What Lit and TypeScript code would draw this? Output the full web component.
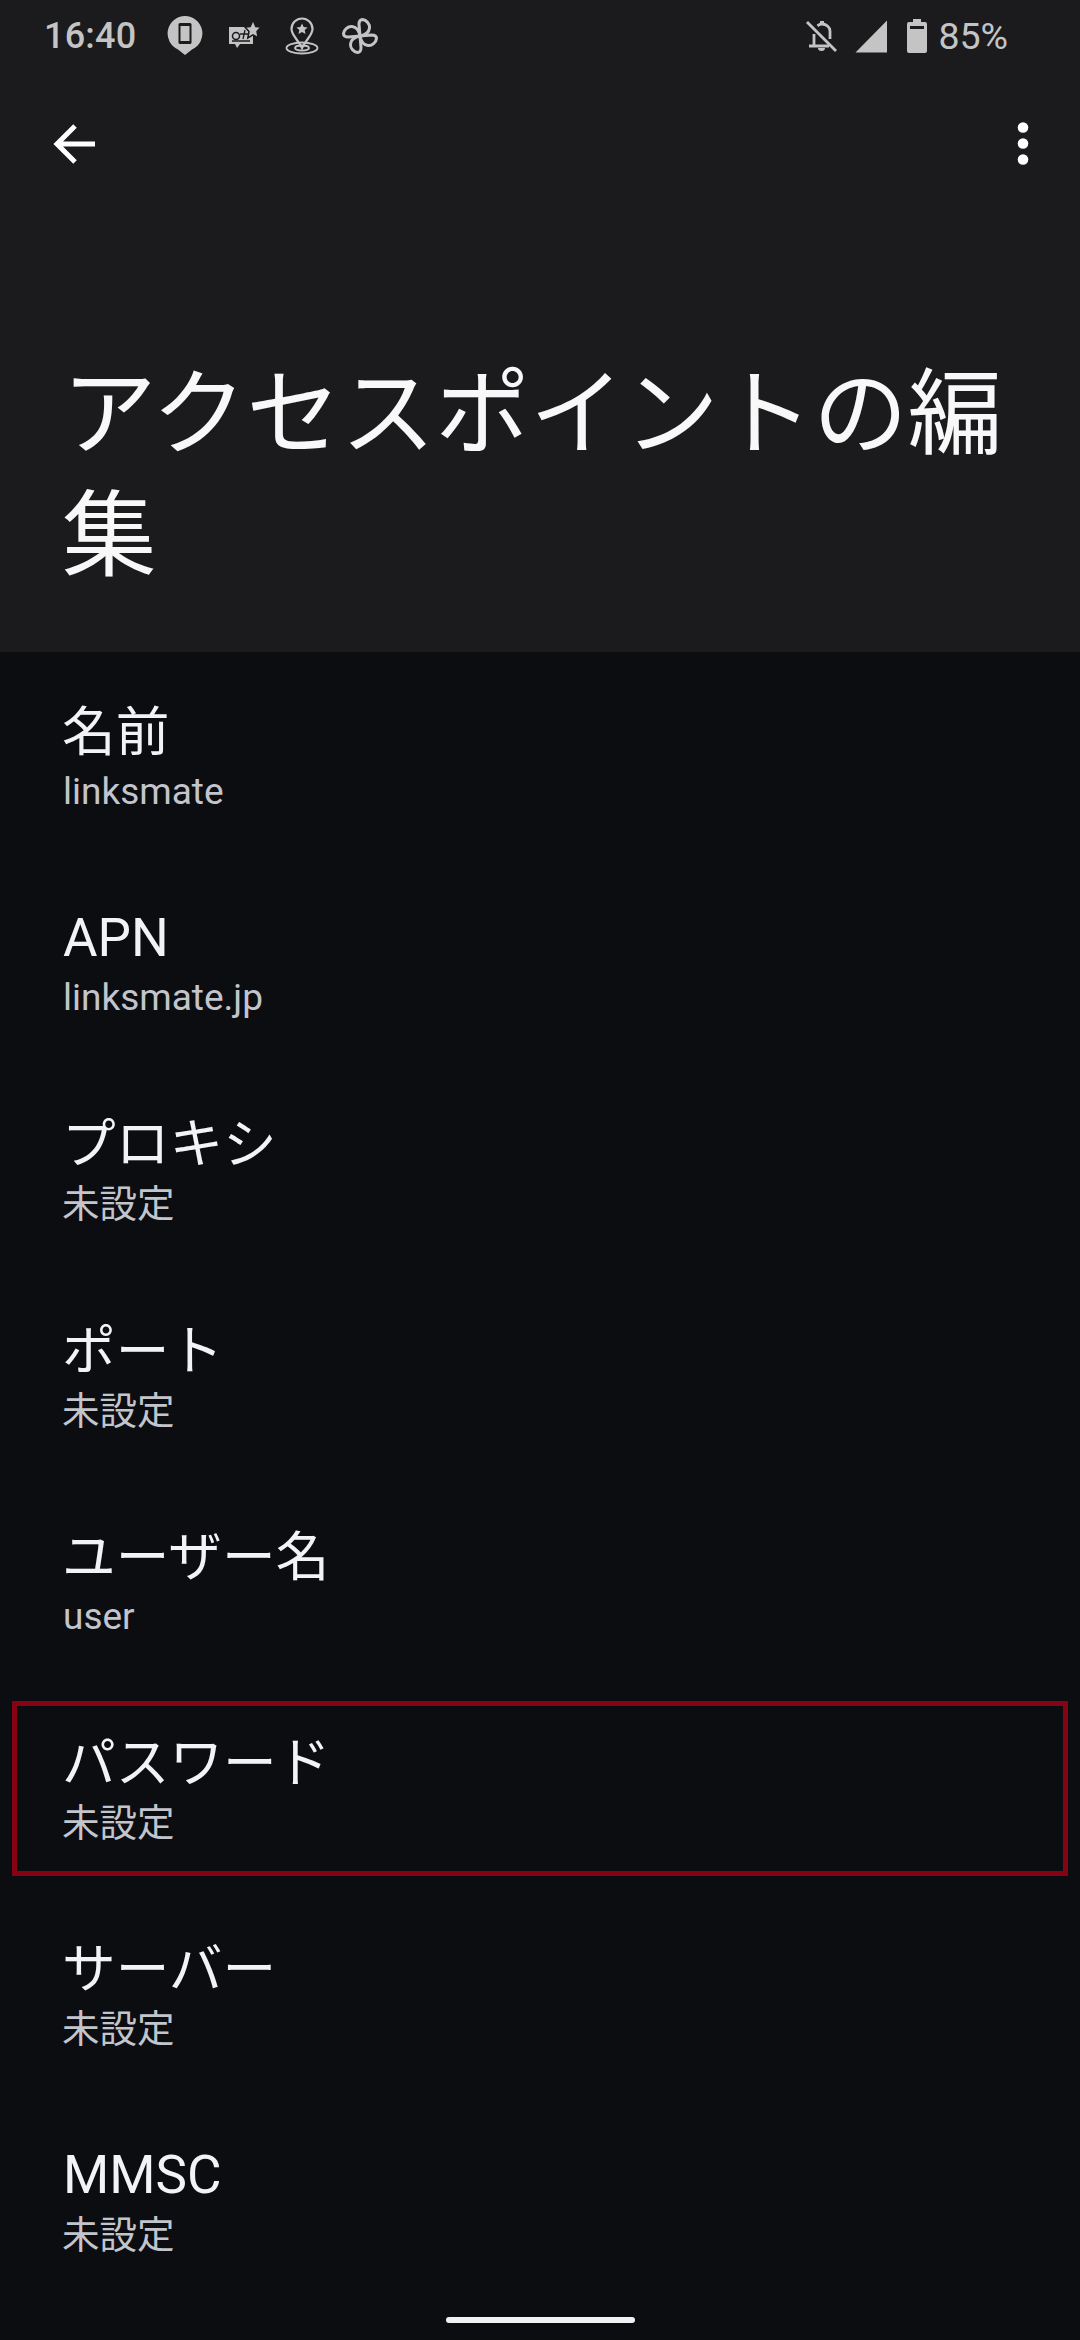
import { LitElement, html, css, svg } from "lit";
import { customElement } from "lit/decorators.js";

const rows: [string, string, boolean?][] = [
  ["名前", "linksmate"],
  ["APN", "linksmate.jp"],
  ["プロキシ", "未設定"],
  ["ポート", "未設定"],
  ["ユーザー名", "user"],
  ["パスワード", "未設定", true],
  ["サーバー", "未設定"],
  ["MMSC", "未設定"],
];

const isCjk = (s: string) => /[^\x00-\x7f]/.test(s);
const blade = "M18 18L17 6.500C17 3 18.500 1.500 20.500 1.500C24.500 2 28 6 27.500 10C27 14.500 23.500 17 18 18z";

@customElement("app-root")
export class AppRoot extends LitElement {
  static styles = css`
    :host {
      display: block;
      width: 1080px;
      height: 2340px;
      overflow: hidden;
      position: relative;
      background: #0c0d10;
      font-family: Roboto, "Noto Sans CJK JP", sans-serif;
    }
    .head { background: #1b1b1d; height: 652px; display: flex; flex-direction: column; }
    .status {
      height: 72px;
      padding: 0 0 0 44px;
      display: flex;
      align-items: center;
      color: #c4c4c4;
      font-size: 36px;
      font-weight: 500;
    }
    .status .time { margin-right: 8px; letter-spacing: 0.2px; }
    .status svg { display: block; flex: none; }
    .left { display: flex; align-items: center; gap: 23px; }
    .spacer { flex: 1; }
    .right { display: flex; align-items: center; margin-right: 72px; }
    .pct { margin-left: 11px; font-weight: 400; font-size: 37.5px; }
    .bar {
      height: 72px;
      margin-top: 36px;
      padding: 0 51px 0 50px;
      display: flex;
      align-items: center;
      justify-content: space-between;
    }
    h1 {
      margin: 165px 0 0;
      padding: 0 40px 0 62px;
      font-family: "Noto Sans CJK JP", sans-serif;
      font-size: 94.5px;
      font-weight: 400;
      line-height: 122px;
      color: #f8f8f9;
    }
    .list { display: flex; flex-direction: column; padding-top: 35px; }
    .row {
      height: 206.2px;
      padding-left: 63px;
      position: relative;
      box-sizing: border-box;
    }
    .t { font-size: 53px; line-height: 69px; padding-top: 11px; color: #f3f3f6; }
    .t.cjk { font-size: 53.7px; margin-left: -1px; }
    .s { font-size: 37px; line-height: 50px; color: #c3c5cc; }
    .s.cjk { font-size: 37.5px; margin-left: -1px; }
    .mark {
      position: absolute;
      left: 12px;
      right: 12px;
      top: -17px;
      height: 175px;
      box-sizing: border-box;
      border: 5px solid #860315;
    }
    .home {
      position: absolute;
      left: 446px;
      top: 2317px;
      width: 189px;
      height: 6px;
      border-radius: 3px;
      background: #f1f1f1;
    }
  `;

  render() {
    return html`
      <div class="head">
        <div class="status">
          <div class="left">
            <span class="time">16:40</span>
            <svg width="36" height="40" viewBox="0 0 36 40">
              <path fill="#c4c4c4" d="M18 0a17.500 17.500 0 0 1 7 33.500L18 39l-7-5.500A17.500 17.500 0 0 1 18 0z" />
              <rect x="11.500" y="7" width="13" height="21" rx="1.500" fill="#1b1b1d" />
              <rect x="13.500" y="10" width="9" height="15" fill="#c4c4c4" />
            </svg>
            <svg width="32" height="32" viewBox="0 0 32 32" style="margin-left:3px">
              <path fill="#c4c4c4" d="M0 7h24v17H11l-3 4-2-4H0z" />
              <circle cx="7" cy="16" r="3.500" fill="#c4c4c4" stroke="#1b1b1d" stroke-width="1.500" />
              <path d="M11 14h11M3 21h18M16 10l-2 9" stroke="#1b1b1d" stroke-width="1.300" fill="none" />
              <path fill="#c4c4c4" stroke="#1b1b1d" stroke-width="1.500" d="M24 0l2.800 6.500 5.200.5-4 4.500 1.200 6.500-5.200-3.200-5.200 3.200 1.200-6.500-4-4.500 5.200-.5z" />
            </svg>
            <svg width="34" height="38" viewBox="0 0 34 38" style="margin-left:1px">
              <path fill="none" stroke="#c4c4c4" stroke-width="2.200" d="M17 1.500a10.500 10.500 0 0 1 10.500 10.500c0 6-6 10-10.500 19-4.500-9-10.500-13-10.500-19a10.500 10.500 0 0 1 10.500-10.500z" />
              <path fill="#c4c4c4" d="M17 6.500l1.700 3.600 3.900.4-2.900 2.600.8 3.900-3.500-2-3.500 2 .8-3.900-2.900-2.600 3.900-.4z" />
              <ellipse cx="17" cy="31" rx="15.500" ry="5.500" fill="none" stroke="#c4c4c4" stroke-width="1.800" />
              <ellipse cx="17" cy="31" rx="7" ry="2.500" fill="none" stroke="#c4c4c4" stroke-width="1.800" />
            </svg>
            <svg width="36" height="36" viewBox="0 0 36 36">
              <g fill="none" stroke="#c4c4c4" stroke-width="3" stroke-linejoin="round">
                ${[0, 90, 180, 270].map((a) => svg`<path transform="rotate(${a} 18 18)" d=${blade} />`)}
              </g>
            </svg>
          </div>
          <div class="spacer"></div>
          <div class="right">
            <svg width="32" height="32" viewBox="0 0 32 32">
              <g fill="none" stroke="#c4c4c4" stroke-width="2.800">
                <path d="M2 2l29 29" />
                <path d="M4 26h20M9 26V14M25 19v-8c0-4-4-7-8-7-2 0-3 .6-4.500 1.800" />
              </g>
              <path fill="#c4c4c4" d="M13 28h7a3.500 3 0 0 1-7 0zM15 1h4v4h-4z" />
            </svg>
            <svg width="33" height="33" viewBox="0 0 33 33" style="margin-left:18px">
              <path fill="#c4c4c4" d="M32 0.500V32.500H0.500z" />
            </svg>
            <svg width="20" height="34" viewBox="0 0 20 34" style="margin-left:19px">
              <path fill="#c4c4c4" d="M6 0h8v3h4a2 2 0 0 1 2 2v27a2 2 0 0 1-2 2H2a2 2 0 0 1-2-2V5a2 2 0 0 1 2-2h4z" />
              <rect x="3" y="7" width="14" height="3" fill="#1b1b1d" />
            </svg>
            <span class="pct">85%</span>
          </div>
        </div>
        <div class="bar">
          <svg width="46" height="42" viewBox="0 0 46 42">
            <path d="M45 21H7M25 3L7 21l18 18" fill="none" stroke="#fff" stroke-width="5" />
          </svg>
          <svg width="12" height="44" viewBox="0 0 12 44">
            <circle cx="6" cy="5.500" r="5.300" fill="#fff" />
            <circle cx="6" cy="21.500" r="5.300" fill="#fff" />
            <circle cx="6" cy="37.500" r="5.300" fill="#fff" />
          </svg>
        </div>
        <h1>アクセスポイントの編集</h1>
      </div>
      <div class="list">
        ${rows.map(
          ([t, s, m]) => html`
            <div class="row">
              ${m ? html`<div class="mark"></div>` : ""}
              <div class="t ${isCjk(t) ? "cjk" : ""}">${t}</div>
              <div class="s ${isCjk(s) ? "cjk" : ""}">${s}</div>
            </div>
          `
        )}
      </div>
      <div class="home"></div>
    `;
  }
}
